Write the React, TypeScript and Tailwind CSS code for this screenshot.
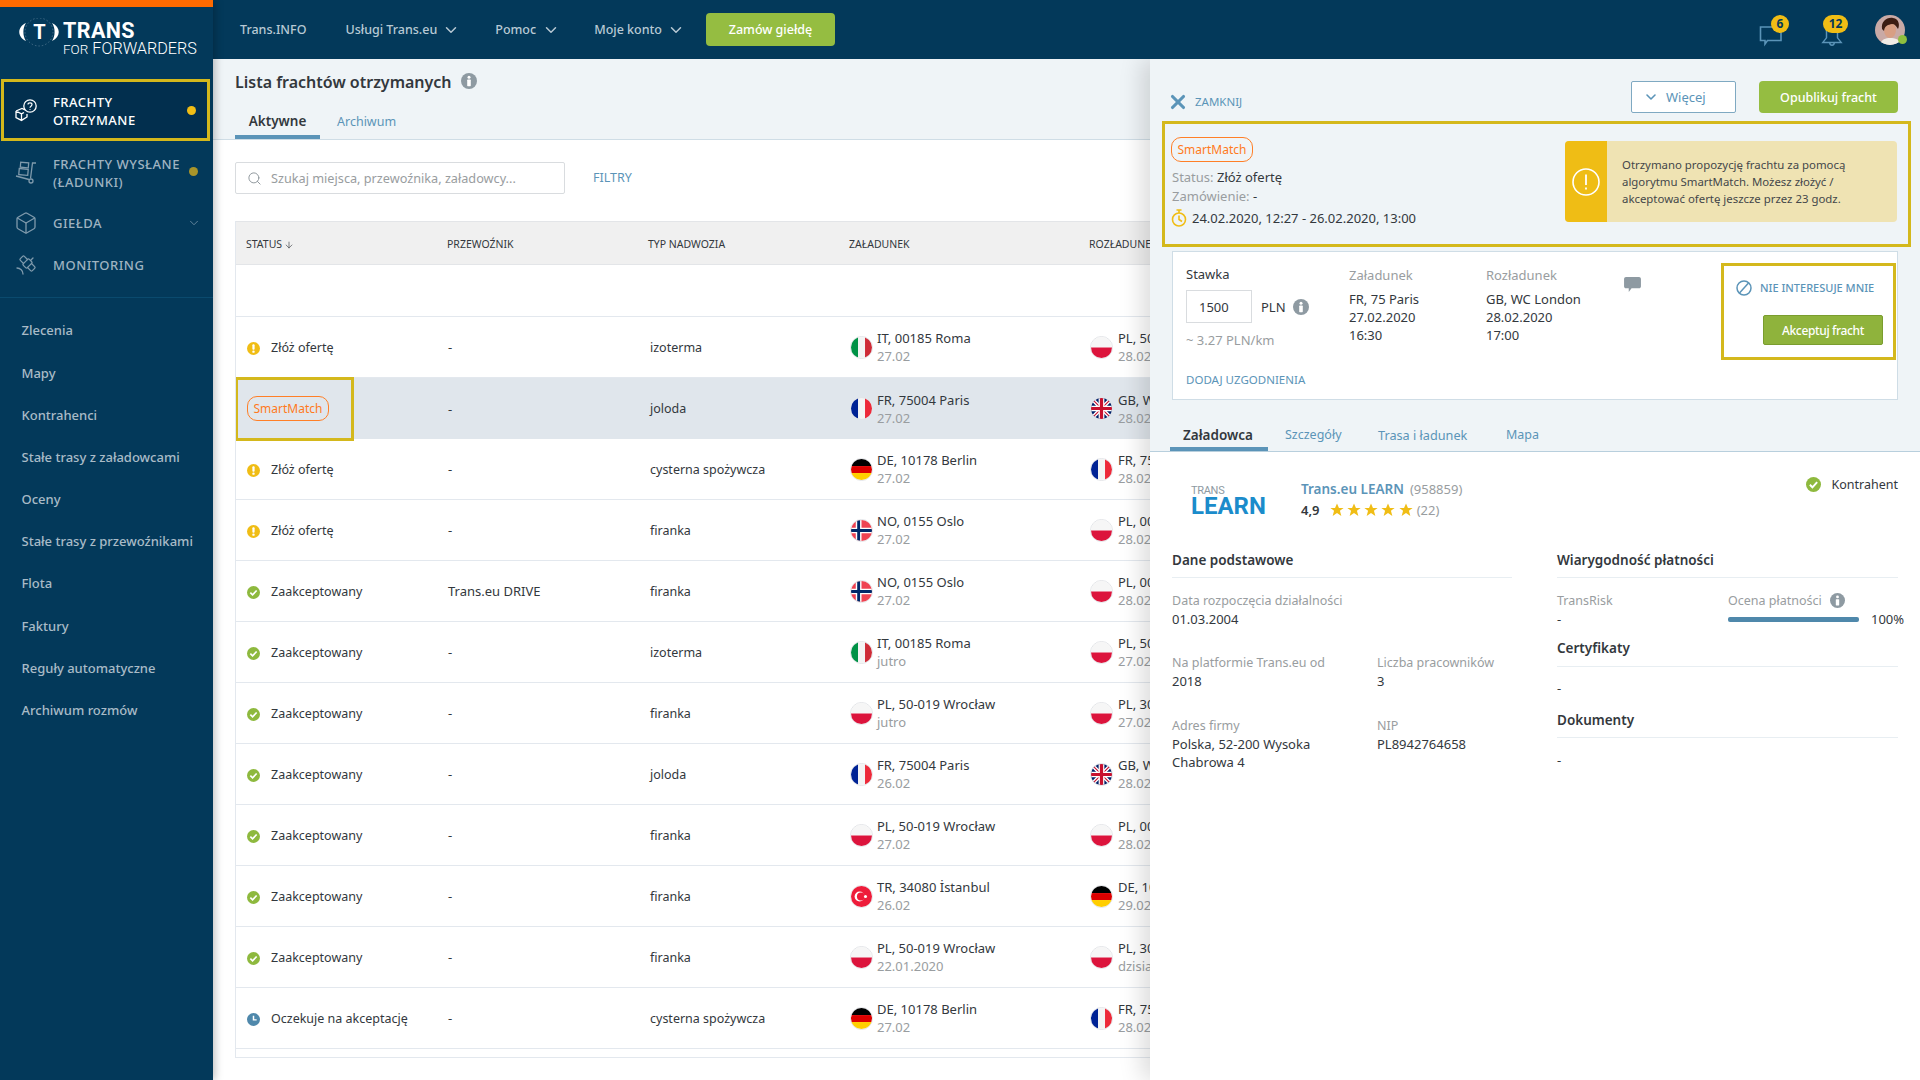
import React from "react";
import { ChevronDown, Search, ArrowDown, X, Box, Satellite } from "lucide-react";

function Flag({ c }: { c: string }) {
  const inner: Record<string, React.ReactNode> = {
    IT: (<><rect width="7.4" height="22" fill="#009246" /><rect x="7.4" width="7.3" height="22" fill="#f4f4f4" /><rect x="14.7" width="7.3" height="22" fill="#ce2b37" /></>),
    PL: (<><rect width="22" height="11" fill="#f6f6f6" /><rect y="11" width="22" height="11" fill="#dc143c" /></>),
    FR: (<><rect width="7.4" height="22" fill="#002395" /><rect x="7.4" width="7.3" height="22" fill="#f4f4f4" /><rect x="14.7" width="7.3" height="22" fill="#ed2939" /></>),
    GB: (<><rect width="22" height="22" fill="#012169" /><path d="M0 0L22 22M22 0L0 22" stroke="#fff" strokeWidth="4" /><path d="M0 0L22 22M22 0L0 22" stroke="#c8102e" strokeWidth="1.2" /><path d="M11 0V22M0 11H22" stroke="#fff" strokeWidth="6" /><path d="M11 0V22M0 11H22" stroke="#c8102e" strokeWidth="3.4" /></>),
    DE: (<><rect width="22" height="7.4" fill="#000" /><rect y="7.4" width="22" height="7.3" fill="#dd0000" /><rect y="14.7" width="22" height="7.3" fill="#ffce00" /></>),
    NO: (<><rect width="22" height="22" fill="#ef4352" /><path d="M8 0V22M0 11H22" stroke="#fff" strokeWidth="6" /><path d="M8 0V22M0 11H22" stroke="#002868" strokeWidth="3" /></>),
    TR: (<><rect width="22" height="22" fill="#ee1c3a" /><circle cx="9" cy="11" r="5.2" fill="#fff" /><circle cx="10.4" cy="11" r="4.2" fill="#ee1c3a" /><circle cx="15.2" cy="11" r="1.6" fill="#fff" /></>),
  };
  return (
    <span className="w-[23px] h-[23px] rounded-full overflow-hidden border border-[#e3e5e8] shrink-0 block">
      <svg viewBox="0 0 22 22" className="w-full h-full block">{inner[c]}</svg>
    </span>
  );
}

function InfoDot({ cls }: { cls: string }) {
  return (
    <svg viewBox="0 0 16 16" className={cls}>
      <circle cx="8" cy="8" r="8" fill="#8e9aa2" />
      <circle cx="8" cy="4.2" r="1.5" fill="#fff" />
      <rect x="6.2" y="6.6" width="3.6" height="6.6" rx="0.6" fill="#fff" />
    </svg>
  );
}

function StatusIcon({ k, cls = "w-[13px] h-[13px]" }: { k: string; cls?: string }) {
  if (k === "warn")
    return (
      <svg viewBox="0 0 14 14" className={`${cls} shrink-0`}>
        <circle cx="7" cy="7" r="7" fill="#f0bd15" />
        <rect x="5.8" y="2.4" width="2.4" height="6" rx="1" fill="#fff" />
        <circle cx="7" cy="10.4" r="1.3" fill="#fff" />
      </svg>
    );
  if (k === "ok")
    return (
      <svg viewBox="0 0 14 14" className={`${cls} shrink-0`}>
        <circle cx="7" cy="7" r="7" fill="#8eb93e" />
        <path d="M3.6 7.2L6 9.6L10.4 4.8" fill="none" stroke="#fff" strokeWidth="1.8" />
      </svg>
    );
  return (
    <svg viewBox="0 0 14 14" className={`${cls} shrink-0`}>
      <circle cx="7" cy="7" r="7" fill="#4f88ab" />
      <path d="M7 3V7.4H10.4" fill="none" stroke="#fff" strokeWidth="1.6" />
    </svg>
  );
}

function Tag() {
  return (
    <span className="inline-flex items-center justify-center w-[82px] h-[25px] rounded-[10px] border border-[#ff7f27] text-[#ff7a1c] text-[12px] bg-transparent">
      SmartMatch
    </span>
  );
}

function FreightIcon() {
  return (
    <svg viewBox="0 0 24 24" className="w-[24px] h-[24px]" fill="none" stroke="#fff" strokeWidth="1.3">
      <circle cx="16" cy="8" r="6.2" />
      <path d="M14 6.6C14 4.2 18 4.2 18 6.6C18 8.2 16 8.2 16 9.8M16 11V11.8" strokeWidth="1.2" />
      <path d="M2 13L8 10.5L11 11.8M2 13V19.6L7.5 22.4L13 19V16M2 13L7.5 15.8V22.4M7.5 15.8L10 14.5" />
    </svg>
  );
}

function TrolleyIcon() {
  return (
    <svg viewBox="0 0 24 24" className="w-[24px] h-[24px]" fill="none" stroke="#7f9aac" strokeWidth="1.3">
      <path d="M22 3L18.5 3L16.5 18.5" />
      <path d="M2 16L15 19.5" />
      <circle cx="17" cy="21" r="2" />
      <rect x="6.5" y="2.5" width="8" height="5" transform="rotate(5 10 5)" />
      <rect x="5" y="9" width="9" height="6" transform="rotate(5 10 12)" />
    </svg>
  );
}

const sideLinks = [
  "Zlecenia",
  "Mapy",
  "Kontrahenci",
  "Stałe trasy z załadowcami",
  "Oceny",
  "Stałe trasy z przewoźnikami",
  "Flota",
  "Faktury",
  "Reguły automatyczne",
  "Archiwum rozmów",
];

function Sidebar() {
  return (
    <aside className="w-[213px] shrink-0 bg-[#03395a] flex flex-col relative z-10 shadow-[2px_0_8px_rgba(0,0,0,0.25)]">
      <div className="h-[7px] bg-[#ff6a00]" />
      <div className="h-[72px] pl-[18px] pt-[10px] flex items-start">
        <svg viewBox="0 0 44 30" className="w-[44px] h-[30px] shrink-0 mt-[1px]">
          <circle cx="21" cy="14" r="14" fill="none" stroke="#6b8ca3" strokeWidth="0.6" strokeDasharray="1.5 2" />
          <path d="M8 5C-1 9 -1 19 8 23C4.5 18 4.5 10 8 5Z" fill="#fff" />
          <path d="M34 5C43 9 43 19 34 23C37.5 18 37.5 10 34 5Z" fill="#fff" />
          <text x="21.5" y="21" textAnchor="middle" fontSize="20" fontWeight="700" fill="#fff" fontFamily="Roboto">T</text>
        </svg>
        <div className="font-['Roboto',sans-serif] text-white ml-[1px] mt-[3px]">
          <div className="text-[21.5px] font-bold leading-[22px] tracking-[0.4px]">TRANS</div>
          <div className="flex items-baseline gap-[4px] leading-[18px] -mt-[2.5px] whitespace-nowrap">
            <span className="text-[13.5px] font-light">FOR</span>
            <span className="text-[16.2px] font-light">FORWARDERS</span>
          </div>
        </div>
      </div>
      <div className="h-[62px] mx-[1px] w-[209px] border-[3px] border-[#d4b81c] bg-[#022f4e] flex items-center pl-[10px] pr-[8px] text-white text-[13px] font-medium leading-[18px]">
        <span className="w-[24px] shrink-0"><FreightIcon /></span>
        <span className="ml-[15px] pt-[2px] flex-1 tracking-[0.5px]">FRACHTY<br />OTRZYMANE</span>
        <span className="w-[9px] h-[9px] rounded-full bg-[#f0bd15] mr-[3px]" />
      </div>
      <div className="h-[61px] flex items-center pl-[14px] pr-[15px] text-[#9fb3c1] text-[13px] font-medium leading-[18px]">
        <span className="w-[24px] shrink-0"><TrolleyIcon /></span>
        <span className="ml-[15px] pt-[2px] flex-1 tracking-[0.5px] whitespace-nowrap">FRACHTY WYSŁANE<br />(ŁADUNKI)</span>
        <span className="w-[9px] h-[9px] rounded-full bg-[#a8942a]" />
      </div>
      <div className="h-[42px] flex items-center pl-[14px] pr-[12px] text-[#9fb3c1] text-[13px] font-medium">
        <Box className="w-[24px] h-[24px] shrink-0 text-[#7f9aac]" strokeWidth={1.3} />
        <span className="ml-[15px] pt-[2px] flex-1 tracking-[0.5px]">GIEŁDA</span>
        <ChevronDown className="w-[14px] h-[14px] text-[#6f8ea3]" strokeWidth={1.5} />
      </div>
      <div className="h-[42px] flex items-center pl-[14px] text-[#9fb3c1] text-[13px] font-medium">
        <Satellite className="w-[24px] h-[24px] shrink-0 text-[#7f9aac]" strokeWidth={1.3} />
        <span className="ml-[15px] pt-[2px] tracking-[0.5px]">MONITORING</span>
      </div>
      <div className="mt-[11px] border-t border-[#0a4a6e]" />
      <div className="mt-[11px] flex flex-col">
        {sideLinks.map((l) => (
          <div key={l} className="h-[42.2px] flex items-center pl-[21.5px] pt-[2px] text-[13px] font-medium text-[#a9bbc7] whitespace-nowrap">
            {l}
          </div>
        ))}
      </div>
    </aside>
  );
}

function TopBar() {
  const nav = "text-[12.5px] text-[#b8c9d4] font-medium whitespace-nowrap flex items-center";
  return (
    <header className="h-[59px] shrink-0 bg-[#03395a] flex items-center pl-[27px] pr-[15px]">
      <span className={`${nav} pt-[2px]`}>Trans.INFO</span>
      <span className={`${nav} ml-[39px]`}>
        <span className="pt-[2px]">Usługi Trans.eu</span>
        <ChevronDown className="w-[18px] h-[18px] ml-[5px]" strokeWidth={2} />
      </span>
      <span className={`${nav} ml-[35px]`}>
        <span className="pt-[2px]">Pomoc</span>
        <ChevronDown className="w-[18px] h-[18px] ml-[6px]" strokeWidth={2} />
      </span>
      <span className={`${nav} ml-[34px]`}>
        <span className="pt-[2px]">Moje konto</span>
        <ChevronDown className="w-[18px] h-[18px] ml-[5px]" strokeWidth={2} />
      </span>
      <button className="ml-[21px] w-[129px] h-[33px] pt-[1px] rounded-[4px] bg-[#95bd41] text-white text-[12.5px] font-medium">Zamów giełdę</button>
      <div className="ml-auto flex items-center">
        <div className="relative w-[32px] h-[36px] mr-[29px]">
          <svg viewBox="0 0 24 22" className="absolute left-[0px] top-[13px] w-[24px] h-[22px]" fill="none" stroke="#5b94b8" strokeWidth="1.6">
            <path d="M1.5 2H22V15.5H8.5L6 19V15.5H1.5Z" />
          </svg>
          <span className="absolute left-[12px] top-[3px] w-[18px] h-[18px] rounded-full bg-[#f0bd15] text-[#03395a] text-[12px] font-bold flex items-center justify-center">6</span>
        </div>
        <div className="relative w-[30px] h-[36px] mr-[25px]">
          <svg viewBox="0 0 24 24" className="absolute left-[1px] top-[12px] w-[22px] h-[24px]" fill="none" stroke="#5b94b8" strokeWidth="1.6">
            <path d="M6 4V14L2 19H22L18 14V4M9.5 19C9.5 23 14.5 23 14.5 19" />
          </svg>
          <span className="absolute left-[3px] top-[3px] w-[25px] h-[18px] rounded-[9px] bg-[#f0bd15] text-[#03395a] text-[12px] font-bold flex items-center justify-center">12</span>
        </div>
        <div className="relative w-[30px] h-[30px]">
          <svg viewBox="0 0 30 30" className="w-[30px] h-[30px] rounded-full block">
            <rect width="30" height="30" fill="#c9aaa6" />
            <path d="M5 30C6 24 11 23 15 23C20 23 25 24 26 30Z" fill="#f1ece6" />
            <ellipse cx="15" cy="15" rx="6" ry="8" fill="#d89f84" />
            <path d="M7 14C6 6 12 2 18 3C24 4 25 10 23 14C21 11 20 9 17 9C13 10 10 10 9 16Z" fill="#3b1d13" />
          </svg>
          <span className="absolute right-[-2px] bottom-[1px] w-[9px] h-[9px] rounded-full bg-[#8fbf3f]" />
        </div>
      </div>
    </header>
  );
}

type R = { s: string; l: string; c: string; b: string; f1: string; t1: string; d1: string; f2: string; t2: string; d2: string };
const rows: R[] = [
  { s: "warn", l: "Złóż ofertę", c: "-", b: "izoterma", f1: "IT", t1: "IT, 00185 Roma", d1: "27.02", f2: "PL", t2: "PL, 50-019 Wrocław", d2: "28.02" },
  { s: "tag", l: "", c: "-", b: "joloda", f1: "FR", t1: "FR, 75004 Paris", d1: "27.02", f2: "GB", t2: "GB, WC London", d2: "28.02" },
  { s: "warn", l: "Złóż ofertę", c: "-", b: "cysterna spożywcza", f1: "DE", t1: "DE, 10178 Berlin", d1: "27.02", f2: "FR", t2: "FR, 75004 Paris", d2: "28.02" },
  { s: "warn", l: "Złóż ofertę", c: "-", b: "firanka", f1: "NO", t1: "NO, 0155 Oslo", d1: "27.02", f2: "PL", t2: "PL, 00-001 Warszawa", d2: "28.02" },
  { s: "ok", l: "Zaakceptowany", c: "Trans.eu DRIVE", b: "firanka", f1: "NO", t1: "NO, 0155 Oslo", d1: "27.02", f2: "PL", t2: "PL, 00-001 Warszawa", d2: "28.02" },
  { s: "ok", l: "Zaakceptowany", c: "-", b: "izoterma", f1: "IT", t1: "IT, 00185 Roma", d1: "jutro", f2: "PL", t2: "PL, 50-019 Wrocław", d2: "27.02" },
  { s: "ok", l: "Zaakceptowany", c: "-", b: "firanka", f1: "PL", t1: "PL, 50-019 Wrocław", d1: "jutro", f2: "PL", t2: "PL, 30-001 Kraków", d2: "27.02" },
  { s: "ok", l: "Zaakceptowany", c: "-", b: "joloda", f1: "FR", t1: "FR, 75004 Paris", d1: "26.02", f2: "GB", t2: "GB, WC London", d2: "28.02" },
  { s: "ok", l: "Zaakceptowany", c: "-", b: "firanka", f1: "PL", t1: "PL, 50-019 Wrocław", d1: "27.02", f2: "PL", t2: "PL, 00-001 Warszawa", d2: "28.02" },
  { s: "ok", l: "Zaakceptowany", c: "-", b: "firanka", f1: "TR", t1: "TR, 34080 İstanbul", d1: "26.02", f2: "DE", t2: "DE, 10178 Berlin", d2: "29.02" },
  { s: "ok", l: "Zaakceptowany", c: "-", b: "firanka", f1: "PL", t1: "PL, 50-019 Wrocław", d1: "22.01.2020", f2: "PL", t2: "PL, 30-001 Kraków", d2: "dzisiaj" },
  { s: "wait", l: "Oczekuje na akceptację", c: "-", b: "cysterna spożywcza", f1: "DE", t1: "DE, 10178 Berlin", d1: "27.02", f2: "FR", t2: "FR, 75004 Paris", d2: "28.02" },
];

function Place({ f, t, d, gap }: { f: string; t: string; d: string; gap: string }) {
  return (
    <div className="flex items-center">
      <Flag c={f} />
      <div className={`${gap} leading-[18px] whitespace-nowrap`}>
        <div className="text-[#33383d]">{t}</div>
        <div className="text-[#999da0]">{d}</div>
      </div>
    </div>
  );
}

function TableRow({ r }: { r: R }) {
  const hi = r.s === "tag";
  return (
    <div className={`h-[61px] flex items-center text-[13px] text-[#33383d] ${hi ? "bg-[#e0e6ec]" : "border-b border-[#e3e8ee]"}`}>
      <div className="w-[212px] shrink-0 flex items-center">
        {hi ? (
          <div className="w-[119px] h-[64px] -ml-[1px] border-[3px] border-[#d4b81c] flex items-center pl-[9px]">
            <Tag />
          </div>
        ) : (
          <div className="flex items-center pl-[11px] pt-[2px] text-[12.5px] whitespace-nowrap">
            <StatusIcon k={r.s} />
            <span className="ml-[11px]">{r.l}</span>
          </div>
        )}
      </div>
      <div className="w-[201px] shrink-0 pt-[2px]">{r.c}</div>
      <div className="w-[201px] shrink-0 pl-[1px] pt-[2px] text-[12.5px]">{r.b}</div>
      <div className="w-[240px] shrink-0"><Place f={r.f1} t={r.t1} d={r.d1} gap="ml-[4px]" /></div>
      <div className="flex-1 min-w-0 overflow-hidden"><Place f={r.f2} t={r.t2} d={r.d2} gap="ml-[5px]" /></div>
    </div>
  );
}

function ListPane() {
  return (
    <div className="h-full flex flex-col">
      <div className="h-[81px] shrink-0 bg-[#eff4f7] border-b border-[#cfdde6] pl-[22px] pt-[12px] flex flex-col">
        <div className="flex items-center h-[22px]">
          <h1 className="text-[16px] font-semibold text-[#33383d] whitespace-nowrap">Lista frachtów otrzymanych</h1>
          <InfoDot cls="w-[16px] h-[16px] ml-[9px] -mt-[3px]" />
        </div>
        <div className="mt-auto flex text-[13px]">
          <div className="w-[85px] h-[28px] text-center leading-[20px] border-b-4 border-[#5b94b8] font-semibold text-[13.5px] text-[#33383d]">Aktywne</div>
          <div className="ml-[17px] pt-[1px] leading-[20px] text-[12.5px] text-[#5b94b8]">Archiwum</div>
        </div>
      </div>
      <div className="flex-1 bg-white pl-[22px] pt-[22px]">
        <div className="flex items-center">
          <div className="w-[330px] h-[32px] border border-[#d9dcdf] rounded-[2px] flex items-center pl-[11px] bg-white">
            <Search className="w-[15px] h-[15px] text-[#8b9399]" strokeWidth={1.5} />
            <span className="ml-[9px] pt-[1px] text-[12.7px] text-[#999da0] whitespace-nowrap">Szukaj miejsca, przewoźnika, załadowcy...</span>
          </div>
          <span className="ml-[28px] text-[12.5px] text-[#5b94b8]">FILTRY</span>
        </div>
        <div className="mt-[27px] w-[915px] overflow-hidden border-l border-[#e3e8ee]">
          <div className="h-[44px] flex items-center bg-[#f0f0f0] border-y border-[#e3e5e8] pt-[3px] text-[10.5px] text-[#33383d] whitespace-nowrap">
            <div className="w-[211px] shrink-0 pl-[10px] flex items-center">STATUS<ArrowDown className="w-[10px] h-[10px] ml-[2px]" strokeWidth={1.5} /></div>
            <div className="w-[201px] shrink-0">PRZEWOŹNIK</div>
            <div className="w-[201px] shrink-0">TYP NADWOZIA</div>
            <div className="w-[240px] shrink-0">ZAŁADUNEK</div>
            <div className="flex-1 min-w-0 overflow-hidden">ROZŁADUNEK</div>
          </div>
          <div className="h-[52px] border-b border-[#e3e8ee]" />
          {rows.map((r, i) => (<TableRow key={i} r={r} />))}
          <div className="mt-[8px] border-t border-[#e3e8ee]" />
        </div>
      </div>
    </div>
  );
}

function Star() {
  return (
    <svg viewBox="0 0 20 20" className="w-[14px] h-[14px] shrink-0">
      <path d="M10 0.8L12.8 7H19.5L14.2 11.2L16.2 18.6L10 14.4L3.8 18.6L5.8 11.2L0.5 7H7.2Z" fill="#f0bd15" />
    </svg>
  );
}

function Field({ l, v, cls }: { l: string; v: React.ReactNode; cls?: string }) {
  return (
    <div className={cls}>
      <div className="text-[#999da0] text-[12.5px]">{l}</div>
      <div className="text-[#33383d]">{v}</div>
    </div>
  );
}

function Panel() {
  return (
    <section className="absolute right-0 top-0 bottom-0 w-[770px] bg-white flex flex-col shadow-[-8px_0_22px_rgba(0,0,0,0.14)] text-[13px] leading-[18px]">
      <div className="h-[393px] shrink-0 bg-[#eff4f7] border-b border-[#b8cfdd] pt-[22px] flex flex-col">
        <div className="flex items-start px-[22px]">
          <div className="flex items-center h-[18px] mt-[12px] text-[11.5px] text-[#5b94b8]">
            <X className="w-[22px] h-[22px] -ml-[5px]" strokeWidth={3.4} />
            <span className="ml-[6px]">ZAMKNIJ</span>
          </div>
          <button className="ml-auto w-[105px] h-[32px] bg-white border border-[#7fa9c2] rounded-[2px] flex items-center pl-[11px] text-[#5b94b8] text-[13px]">
            <ChevronDown className="w-[16px] h-[16px]" strokeWidth={2.4} />
            <span className="ml-[7px]">Więcej</span>
          </button>
          <button className="ml-[23px] w-[139px] h-[32px] pt-[2px] bg-[#95bd41] rounded-[4px] text-white text-[12.5px] font-medium">Opublikuj fracht</button>
        </div>
        <div className="mt-[8px] ml-[12px] mr-[9px] h-[126px] border-[3px] border-[#d4b81c] flex items-start pl-[6px] pr-[11px] pt-[13px]">
          <div className="flex flex-col">
            <Tag />
            <div className="mt-[6px] pl-[1px] text-[#999da0]">Status: <span className="text-[#33383d]">Złóż ofertę</span></div>
            <div className="mt-[1px] pl-[1px] text-[#999da0]">Zamówienie: <span className="text-[#33383d]">-</span></div>
            <div className="mt-[4px] flex items-center text-[#33383d] whitespace-nowrap">
              <svg viewBox="0 0 16 18" className="w-[16px] h-[18px] shrink-0" fill="none" stroke="#f0bd15" strokeWidth="1.6">
                <circle cx="8" cy="10.5" r="6.5" />
                <path d="M8 6.5V10.5L11 12.5M5.5 1H10.5M8 1V4" />
              </svg>
              <span className="ml-[5px]">24.02.2020, 12:27 - 26.02.2020, 13:00</span>
            </div>
          </div>
          <div className="ml-auto mt-[4px] w-[332px] h-[81px] rounded-[4px] overflow-hidden flex bg-[#efe3b3]">
            <div className="w-[42px] shrink-0 bg-[#efbd15] flex items-center justify-center">
              <svg viewBox="0 0 28 28" className="w-[28px] h-[28px]" fill="none" stroke="#fff" strokeWidth="1.6">
                <circle cx="14" cy="14" r="13" />
                <path d="M14 6.5V17M14 19.5V21.5" strokeWidth="1.8" />
              </svg>
            </div>
            <div className="pl-[15px] pt-[15px] text-[11.4px] leading-[17px] text-[#44474a] whitespace-nowrap">
              Otrzymano propozycję frachtu za pomocą<br />algorytmu SmartMatch. Możesz złożyć /<br />akceptować ofertę jeszcze przez 23 godz.
            </div>
          </div>
        </div>
        <div className="mt-[4px] mx-[22px] h-[149px] border border-[#cfdde6] bg-white flex items-start pl-[13px] pt-[13px] relative">
          <div className="w-[163px] shrink-0">
            <div className="text-[#33383d]">Stawka</div>
            <div className="mt-[7px] flex items-center">
              <div className="w-[66px] h-[33px] border border-[#d9dcdf] flex items-center pl-[12px] text-[#33383d]">1500</div>
              <span className="ml-[9px] text-[#33383d]">PLN</span>
              <InfoDot cls="w-[16px] h-[16px] ml-[7px]" />
            </div>
            <div className="mt-[8px] text-[#999da0] whitespace-nowrap">~ 3.27 PLN/km</div>
            <div className="mt-[22px] text-[11.5px] text-[#5b94b8] whitespace-nowrap">DODAJ UZGODNIENIA</div>
          </div>
          <div className="w-[137px] shrink-0 pt-[1px]">
            <div className="text-[#999da0]">Załadunek</div>
            <div className="mt-[6px] text-[#33383d]">FR, 75 Paris<br />27.02.2020<br />16:30</div>
          </div>
          <div className="w-[138px] shrink-0 pt-[1px]">
            <div className="text-[#999da0]">Rozładunek</div>
            <div className="mt-[6px] text-[#33383d]">GB, WC London<br />28.02.2020<br />17:00</div>
          </div>
          <svg viewBox="0 0 18 16" className="w-[17px] h-[15px] shrink-0 mt-[12px]">
            <path d="M2 0H16C17 0 18 1 18 2V10C18 11 17 12 16 12H8L5 16V12H2C1 12 0 11 0 10V2C0 1 1 0 2 0Z" fill="#8e9aa2" />
          </svg>
          <div className="ml-auto -mt-[2px] mr-[1px] w-[175px] h-[97px] border-[3px] border-[#d4b81c] flex flex-col pl-[12px] pt-[14px]">
            <div className="flex items-center h-[16px] text-[11px] font-medium text-[#5b94b8] whitespace-nowrap">
              <svg viewBox="0 0 16 16" className="w-[16px] h-[16px] shrink-0" fill="none" stroke="#5b94b8" strokeWidth="1.5">
                <circle cx="8" cy="8" r="7" />
                <path d="M3.5 13L12.5 3" />
              </svg>
              <span className="ml-[8px]">NIE INTERESUJE MNIE</span>
            </div>
            <button className="mt-[19px] ml-[27px] w-[120px] h-[30px] pt-[1px] bg-[#8fb33c] border border-[#7a9d2e] rounded-[2px] text-white text-[12px] tracking-[-0.35px] font-medium">Akceptuj fracht</button>
          </div>
        </div>
        <div className="mt-auto ml-[20px] flex items-end">
          <div className="w-[98px] h-[26px] pl-[13px] border-b-4 border-[#5b94b8] font-semibold text-[13.5px] text-[#33383d] leading-[20px]">Załadowca</div>
          <div className="w-[93px] ml-[17px] h-[26px] leading-[20px] text-[12.5px] text-[#5b94b8]">Szczegóły</div>
          <div className="w-[129px] h-[26px] leading-[20px] text-[12.7px] text-[#5b94b8]">Trasa i ładunek</div>
          <div className="h-[26px] leading-[20px] text-[12.5px] -ml-[1px] text-[#5b94b8]">Mapa</div>
        </div>
      </div>
      <div className="flex-1 px-[22px] pt-[28px]">
        <div className="h-[71px] flex items-start">
          <div className="w-[129px] shrink-0 pl-[19px] pt-[5px]">
            <div className="text-[11px] leading-[11px] text-[#8e9aa2] tracking-[-0.3px] font-['Roboto',sans-serif]">TRANS</div>
            <div className="text-[24px] leading-[20px] font-bold text-[#1b8ccb] font-['Roboto',sans-serif]">LEARN</div>
          </div>
          <div className="flex flex-col">
            <div><span className="text-[#5b94b8] text-[13.5px] font-semibold">Trans.eu LEARN</span><span className="ml-[6px] text-[#999da0]">(958859)</span></div>
            <div className="mt-[3px] flex items-center text-[#33383d]">
              <span className="font-semibold">4,9</span>
              <span className="ml-[10px] flex gap-[3.3px]"><Star /><Star /><Star /><Star /><Star /></span>
              <span className="ml-[4px] text-[#999da0]">(22)</span>
            </div>
          </div>
          <div className="ml-auto -mt-[5px] flex items-center text-[#33383d]">
            <StatusIcon k="ok" cls="w-[15px] h-[15px]" />
            <span className="ml-[11px] pt-[1px] text-[12.5px]">Kontrahent</span>
          </div>
        </div>
        <div className="flex gap-[45px]">
          <div className="w-[340px] shrink-0">
            <div className="font-semibold text-[13.5px] text-[#33383d] pb-[8px] border-b border-[#e8eef2] h-[27px]">Dane podstawowe</div>
            <Field cls="mt-[14px]" l="Data rozpoczęcia działalności" v="01.03.2004" />
            <div className="mt-[26px] flex">
              <Field cls="w-[205px]" l="Na platformie Trans.eu od" v="2018" />
              <Field l="Liczba pracowników" v="3" />
            </div>
            <div className="mt-[27px] flex">
              <Field cls="w-[205px]" l="Adres firmy" v={<>Polska, 52-200 Wysoka<br />Chabrowa 4</>} />
              <Field l="NIP" v="PL8942764658" />
            </div>
          </div>
          <div className="w-[341px] shrink-0">
            <div className="font-semibold text-[13.5px] text-[#33383d] pb-[8px] border-b border-[#e8eef2] h-[27px]">Wiarygodność płatności</div>
            <div className="mt-[14px] flex">
              <Field cls="w-[171px] shrink-0" l="TransRisk" v="-" />
              <div className="flex-1">
                <div className="flex items-center text-[12.5px] text-[#999da0] whitespace-nowrap">Ocena płatności<InfoDot cls="w-[15px] h-[15px] ml-[8px] -mt-[2px]" /></div>
                <div className="flex items-center h-[18px]">
                  <div className="w-[131px] h-[5px] shrink-0 rounded-[2px] bg-[#4f88ab]" />
                  <span className="ml-[12px] text-[#33383d] whitespace-nowrap">100%</span>
                </div>
              </div>
            </div>
            <div className="mt-[11px] font-semibold text-[13.5px] text-[#33383d] h-[28px] pb-[9px] border-b border-[#e8eef2]">Certyfikaty</div>
            <div className="mt-[12px] text-[#33383d]">-</div>
            <div className="mt-[14px] font-semibold text-[13.5px] text-[#33383d] h-[27px] pb-[8px] border-b border-[#e8eef2]">Dokumenty</div>
            <div className="mt-[13px] text-[#33383d]">-</div>
          </div>
        </div>
      </div>
    </section>
  );
}

export default function App() {
  return (
    <div className="w-[1920px] h-[1080px] overflow-hidden flex bg-white font-['Noto_Sans',sans-serif]">
      <Sidebar />
      <div className="flex-1 min-w-0 flex flex-col">
        <TopBar />
        <main className="flex-1 min-h-0 relative overflow-hidden">
          <ListPane />
          <Panel />
        </main>
      </div>
    </div>
  );
}
